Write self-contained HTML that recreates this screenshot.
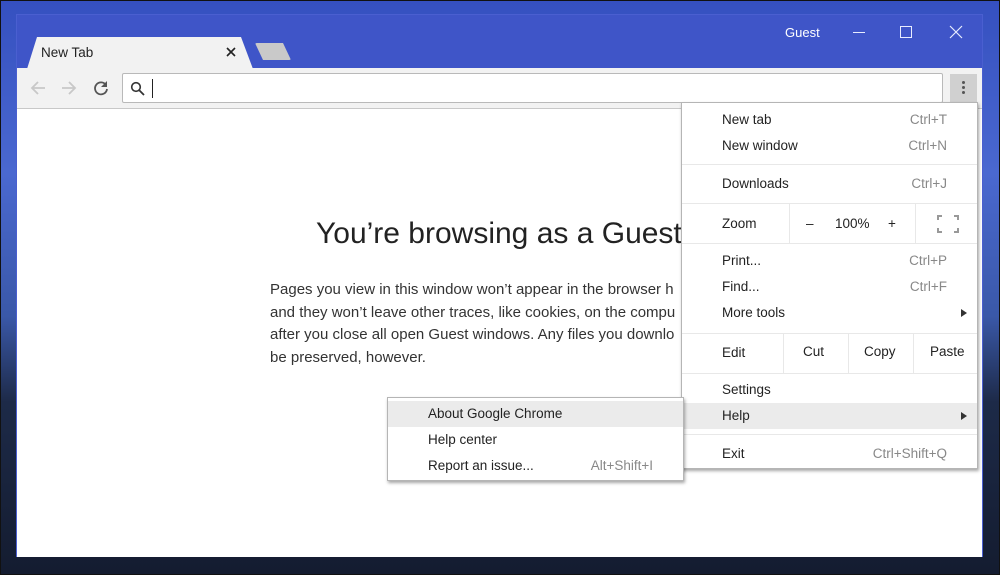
<!DOCTYPE html>
<html><head><meta charset="utf-8"><style>
*{margin:0;padding:0;box-sizing:border-box}
body{width:1000px;height:575px;overflow:hidden;position:relative;font-family:"Liberation Sans",sans-serif;background:#111}
#bg{position:absolute;left:1px;top:1px;right:1px;bottom:1px;background:linear-gradient(180deg,#3550c0 0%,#4a68d0 30%,#3a58a8 55%,#1d2a48 70%,#141c30 100%)}
#win{position:absolute;left:16px;top:14px;width:967px;height:543px;background:#3f55c8;border:1px solid #4a5fd0}
.abs{position:absolute}
#tab{left:10px;top:22px;width:226px;height:32px;background:#f2f2f2;clip-path:polygon(0 100%,10px 0,calc(100% - 12px) 0,100% 100%)}
#tab2{left:238px;top:28px;width:36px;height:17px;background:#c9c9c9;clip-path:polygon(0 0,28px 0,100% 100%,8px 100%);border-radius:2px}
#toolbar{left:0;top:53px;width:965px;height:41px;background:#f2f2f2;border-bottom:1px solid #c8c8c8}
#omni{left:105px;top:5px;width:821px;height:30px;background:#fff;border:1px solid #b9b9b9;border-radius:2px}
#content{left:0;top:94px;width:965px;height:448px;background:#fff}
.menu{position:absolute;background:#fff;border:1px solid #b5b5b5;box-shadow:1px 2px 3px rgba(0,0,0,.35);font-size:13.5px;color:#222}
.it{position:absolute;left:0;right:0;height:26px;line-height:26px}
.it .l{position:absolute;left:40px}
.it .r{position:absolute;right:30px;color:#888}
.sep{position:absolute;left:0;right:0;height:1px;background:#e8e8e8}
.vs{position:absolute;width:1px;background:#e8e8e8}
.hl{background:#ebebeb}
.arr{position:absolute;right:10px;top:9px;width:0;height:0;border-left:6px solid #333;border-top:4px solid transparent;border-bottom:4px solid transparent}
</style></head><body>
<div id="bg"></div>
<div id="win">
 <div class="abs" style="left:768px;top:10px;color:#fff;font-size:13px">Guest</div>
 <div class="abs" style="left:836px;top:17px;width:12px;height:1px;background:#e8ecff"></div>
 <div class="abs" style="left:883px;top:11px;width:12px;height:12px;border:1px solid #e8ecff"></div>
 <svg class="abs" style="left:932px;top:10px" width="14" height="14"><path d="M1 1L13 13M13 1L1 13" stroke="#e8ecff" stroke-width="1.2"/></svg>
 <div id="tab" class="abs"></div>
 <div class="abs" style="left:24px;top:30px;font-size:13.5px;color:#222">New Tab</div>
 <svg class="abs" style="left:209px;top:32px" width="10" height="10"><path d="M1 1L9 9M9 1L1 9" stroke="#222" stroke-width="1.6"/></svg>
 <div id="tab2" class="abs"></div>
 <div id="toolbar" class="abs">
  <svg class="abs" style="left:12px;top:11px" width="18" height="18"><path d="M16 9H3M9 3L3 9L9 15" stroke="#c8c8c8" stroke-width="1.8" fill="none"/></svg>
  <svg class="abs" style="left:43px;top:11px" width="18" height="18"><path d="M2 9H15M9 3L15 9L9 15" stroke="#c8c8c8" stroke-width="1.8" fill="none"/></svg>
  <svg class="abs" style="left:75px;top:11px" width="18" height="18"><path d="M14 6A6 6 0 1 0 15 10" stroke="#555" stroke-width="1.8" fill="none"/><path d="M15 2V8H9Z" fill="#555"/></svg>
  <div id="omni" class="abs">
   <svg class="abs" style="left:7px;top:7px" width="16" height="16"><circle cx="6" cy="6" r="4.3" stroke="#333" stroke-width="1.6" fill="none"/><path d="M9 9L14 14" stroke="#333" stroke-width="1.8"/></svg>
   <div class="abs" style="left:29px;top:5px;width:1px;height:19px;background:#222"></div>
  </div>
  <div class="abs" style="left:933px;top:6px;width:27px;height:28px;background:#d0d0d0"></div>
  <div class="abs" style="left:945px;top:13px;width:3px;height:3px;background:#555;border-radius:50%;box-shadow:0 5px 0 #555,0 10px 0 #555"></div>
 </div>
 <div id="content" class="abs">
  <div class="abs" style="left:299px;top:108px;font-size:30px;color:#222;white-space:nowrap">You’re browsing as a Guest</div>
  <div class="abs" style="left:253px;top:170px;font-size:15px;line-height:22.5px;color:#333;white-space:nowrap">Pages you view in this window won’t appear in the browser h<br>and they won’t leave other traces, like cookies, on the compu<br>after you close all open Guest windows. Any files you downlo<br>be preserved, however.</div>
 </div>
</div>

<div class="menu" style="left:681px;top:102px;width:297px;height:367px">
 <div class="it" style="top:4px"><span class="l">New tab</span><span class="r">Ctrl+T</span></div>
 <div class="it" style="top:30px"><span class="l">New window</span><span class="r">Ctrl+N</span></div>
 <div class="sep" style="top:61px"></div>
 <div class="it" style="top:68px"><span class="l">Downloads</span><span class="r">Ctrl+J</span></div>
 <div class="sep" style="top:100px"></div>
 <div class="it" style="top:108px"><span class="l">Zoom</span></div>
 <div class="vs" style="left:107px;top:101px;height:39px"></div>
 <div class="abs" style="left:124px;top:113px;font-size:13.5px">–</div>
 <div class="abs" style="left:153px;top:113px;font-size:13.5px">100%</div>
 <div class="abs" style="left:206px;top:113px;font-size:13.5px">+</div>
 <div class="vs" style="left:233px;top:101px;height:39px"></div>
 <svg class="abs" style="left:255px;top:112px" width="22" height="18"><path d="M1 5V1H5M17 1H21V5M21 13V17H17M5 17H1V13" stroke="#999" stroke-width="2" fill="none"/></svg>
 <div class="sep" style="top:140px"></div>
 <div class="it" style="top:145px"><span class="l">Print...</span><span class="r">Ctrl+P</span></div>
 <div class="it" style="top:171px"><span class="l">Find...</span><span class="r">Ctrl+F</span></div>
 <div class="it" style="top:197px"><span class="l">More tools</span><span class="arr"></span></div>
 <div class="sep" style="top:230px"></div>
 <div class="it" style="top:237px"><span class="l">Edit</span></div>
 <div class="vs" style="left:101px;top:231px;height:39px"></div>
 <div class="abs" style="left:121px;top:241px">Cut</div>
 <div class="vs" style="left:166px;top:231px;height:39px"></div>
 <div class="abs" style="left:182px;top:241px">Copy</div>
 <div class="vs" style="left:231px;top:231px;height:39px"></div>
 <div class="abs" style="left:248px;top:241px">Paste</div>
 <div class="sep" style="top:270px"></div>
 <div class="it" style="top:274px"><span class="l">Settings</span></div>
 <div class="it hl" style="top:300px"><span class="l">Help</span><span class="arr"></span></div>
 <div class="sep" style="top:331px"></div>
 <div class="it" style="top:338px"><span class="l">Exit</span><span class="r">Ctrl+Shift+Q</span></div>
</div>

<div class="menu" style="left:387px;top:397px;width:297px;height:84px">
 <div class="it hl" style="top:3px"><span class="l">About Google Chrome</span></div>
 <div class="it" style="top:29px"><span class="l">Help center</span></div>
 <div class="it" style="top:55px"><span class="l">Report an issue...</span><span class="r">Alt+Shift+I</span></div>
</div>
</body></html>
